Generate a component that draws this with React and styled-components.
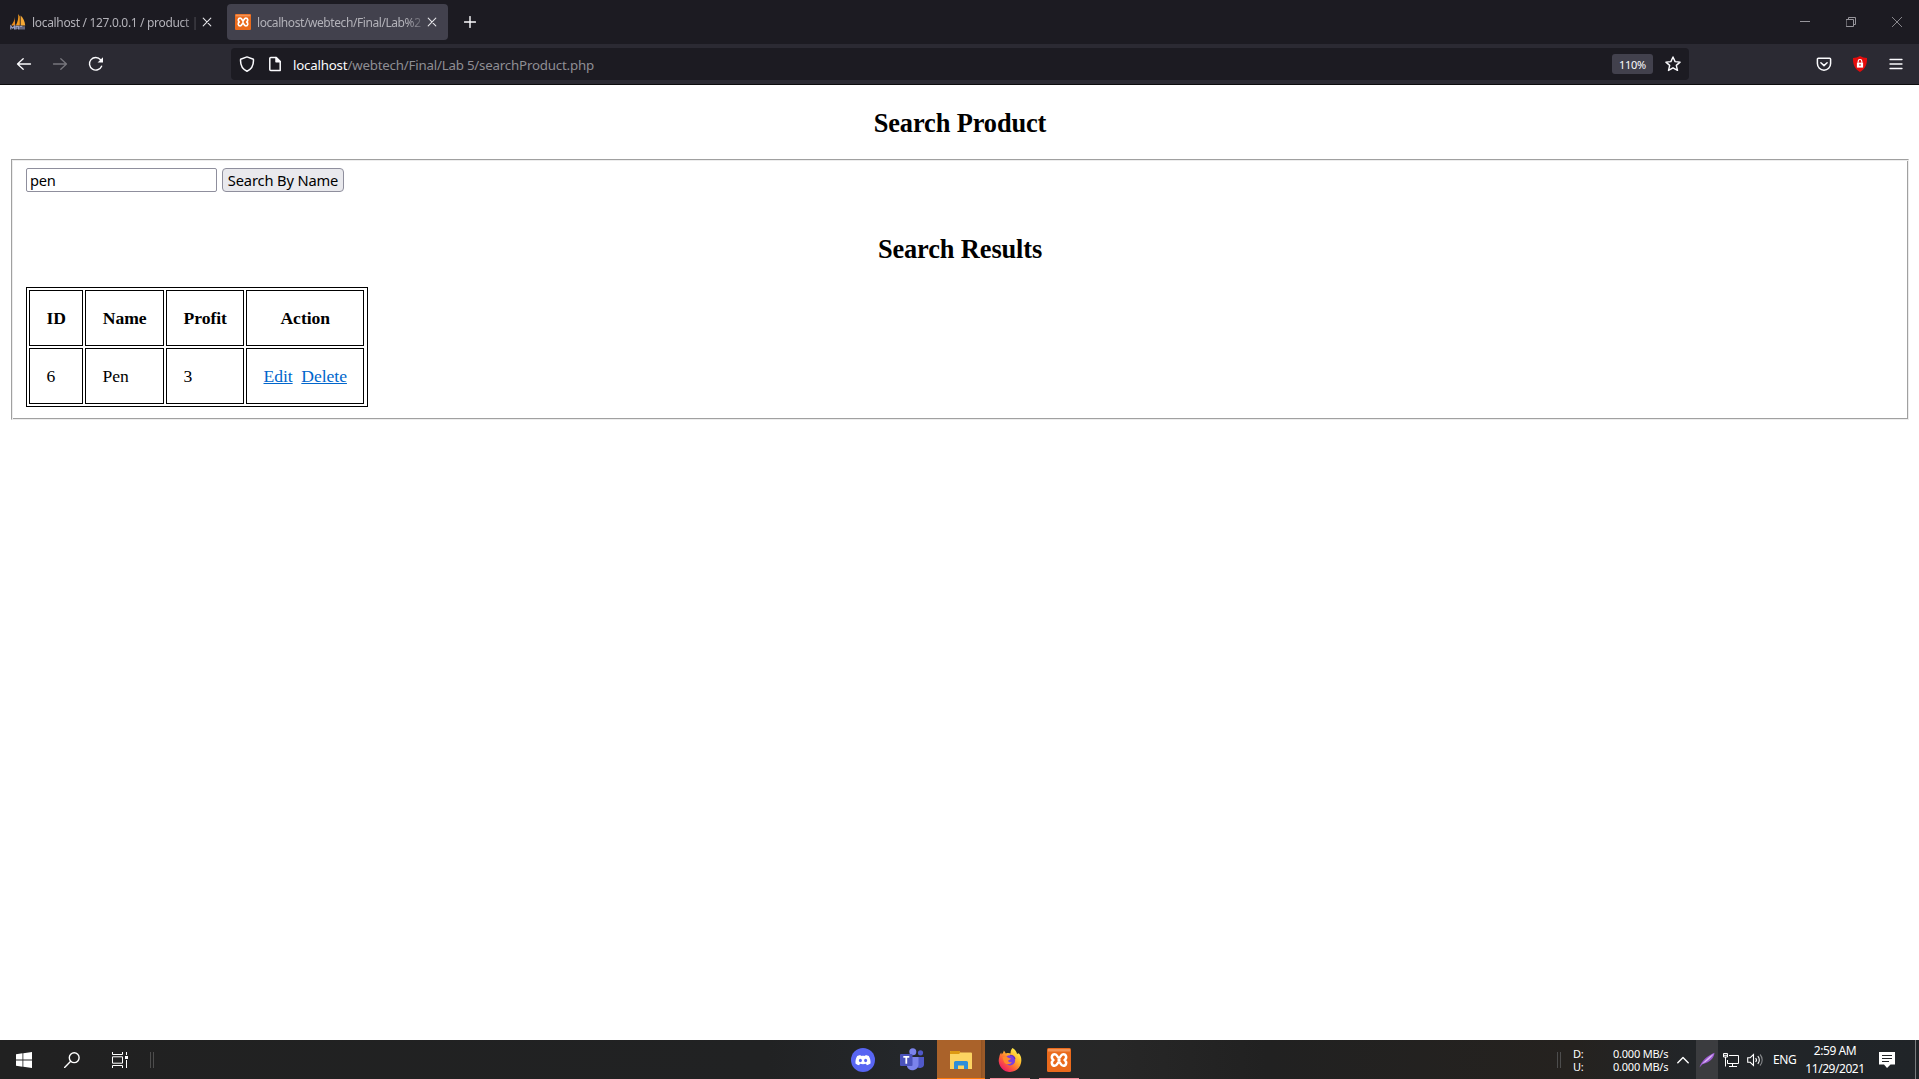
import React from 'react';
import styled, { createGlobalStyle } from 'styled-components';

const UI = `"Noto Sans", "Open Sans", "Liberation Sans", sans-serif`;
const SERIF = `"Liberation Serif", "Times New Roman", serif`;

const Global = createGlobalStyle`
  * { box-sizing: border-box; }
  html, body { margin: 0; padding: 0; background: #fff; overflow: hidden; }
  svg { display: block; flex: none; }
`;

const Screen = styled.div`
  display: flex;
  flex-direction: column;
  width: 1919px;
  height: 1079px;
  background: #fff;
  overflow: hidden;
`;

/* ---------- browser chrome ---------- */

const TabBar = styled.header`
  display: flex;
  flex: none;
  height: 44px;
  padding-top: 4px;
  background: #1c1b22;
  font-family: ${UI};
`;

const Tab = styled.div`
  display: flex;
  align-items: center;
  width: ${(p) => p.$width}px;
  height: 36px;
  margin-left: ${(p) => p.$gap}px;
  padding: 0 11px 0 8px;
  border-radius: 4px;
  background: ${(p) => (p.$active ? '#42414d' : 'transparent')};
`;

const TabTitle = styled.span`
  flex: 1;
  min-width: 0;
  margin: 1px 0 0 6px;
  white-space: pre;
  font-size: 12px;
  line-height: 20px;
  letter-spacing: ${(p) => p.$spacing}px;
  color: #b3b2b9;
  mask-image: linear-gradient(to left, transparent 0, #000 20px);
`;

const TabClose = styled.span`
  display: flex;
  align-items: center;
  justify-content: center;
  width: 10px;
  height: 24px;
`;

const IconButton = styled.span`
  display: flex;
  flex: none;
  align-items: center;
  justify-content: center;
  width: ${(p) => p.$width || 36}px;
  height: 36px;
`;

const Spacer = styled.div`
  flex: 1;
`;

const NavBar = styled.nav`
  display: flex;
  flex: none;
  align-items: center;
  height: 41px;
  padding: 0 5px 0 6px;
  background: #2b2a33;
  border-bottom: 1px solid #0c0c0d;
  font-family: ${UI};
`;

const UrlBar = styled.div`
  display: flex;
  align-items: center;
  width: 1458px;
  height: 32px;
  margin-left: 117px;
  padding: 0 2px;
  border-radius: 4px;
  background: #1c1b22;
`;

const Url = styled.span`
  flex: 1;
  margin: 2px 0 0 4px;
  font-size: 13.3px;
  line-height: 20px;
  letter-spacing: -0.2px;
  white-space: pre;
  color: #8f8e94;
`;

const Host = styled.span`
  color: #fbfbfe;
`;

const ZoomBadge = styled.span`
  width: 41px;
  height: 20px;
  margin-right: 6px;
  border-radius: 3px;
  background: #42414d;
  color: #fbfbfe;
  font-size: 11px;
  line-height: 21px;
  letter-spacing: -0.3px;
  text-align: center;
`;

/* ---------- web page ---------- */

const Page = styled.main`
  flex: 1;
  min-height: 0;
  padding: 0 10px 0 11px;
  font-family: ${SERIF};
  font-size: 17.6px;
  color: #000;
`;

const Heading = styled.h2`
  margin: 0;
  padding-top: ${(p) => p.$top}px;
  height: ${(p) => p.$height}px;
  font-size: 26.4px;
  line-height: 30px;
  letter-spacing: -0.12px;
  text-align: center;
`;

const Fieldset = styled.section`
  height: 261px;
  padding: 8px 13px 0;
  border: 1px solid;
  border-color: #a0a0a0 #ededed #ededed #a0a0a0;
  box-shadow: inset 1px 1px 0 #ededed, inset -1px -1px 0 #a0a0a0;
`;

const SearchRow = styled.div`
  display: flex;
  gap: 5px;
  padding-left: 1px;
`;

const SearchInput = styled.input`
  width: 191px;
  height: 24px;
  padding: 1px 3px;
  border: 1px solid #8f8f9d;
  border-radius: 2px;
  background: #fff;
  color: #000;
  font: 14.67px ${UI};
  letter-spacing: -0.3px;
  outline: none;
`;

const SearchButton = styled.button`
  width: 122px;
  height: 24px;
  padding: 0;
  border: 1px solid #8f8f9d;
  border-radius: 4px;
  background: #e9e9ed;
  color: #000;
  font: 14.67px/20px ${UI};
  letter-spacing: -0.13px;
  white-space: nowrap;
`;

const Results = styled.table`
  width: 342px;
  margin-left: 1px;
  table-layout: fixed;
  border: 1px solid #000;
  border-spacing: 2px;
  padding-right: 1px;
`;

const Cell = styled.td`
  width: ${(p) => p.$width}px;
  height: 56px;
  padding: 0 16px 0 16.5px;
  border: 1px solid #000;
  line-height: 20px;
  letter-spacing: -0.05px;
  white-space: pre;
`;

const HeadCell = styled(Cell)`
  font-weight: bold;
  text-align: center;
`;

const Link = styled.a`
  color: #0066cc;
  text-decoration: underline;
`;

/* ---------- taskbar ---------- */

const Taskbar = styled.footer`
  display: flex;
  flex: none;
  height: 39px;
  background: linear-gradient(90deg, #212121 0, #212223 40%, #24272a 47%, #272727 58%, #212121 66%, #25221f 82%, #222528 88%, #202428 100%);
  color: #fff;
  font-family: ${UI};
`;

const LeftGroup = styled.div`
  display: flex;
  flex: none;
  width: 839px;
`;

const Slot = styled.div`
  display: flex;
  flex: none;
  align-items: center;
  justify-content: center;
  width: ${(p) => p.$width || 48}px;
  height: 39px;
  padding-top: 1px;
`;

const Apps = styled.div`
  display: flex;
  gap: 1px;
`;

const ActiveSlot = styled(Slot)`
  border-bottom: 1px solid #ff7a0a;
  padding-top: 2px;
  background: linear-gradient(90deg, #aa622a 44px, #8c5023 44px, #9c5a28 46px);
`;

const RunningSlot = styled(Slot)`
  background: linear-gradient(#f58b99, #f58b99) 4px 38px / 40px 1px no-repeat;
`;

const Grip = styled.div`
  align-self: center;
  flex: none;
  width: 4px;
  height: 16px;
  margin-left: ${(p) => p.$left || 0}px;
  border: solid #4d4d4d;
  border-width: 0 1px;
`;

const NetMeter = styled.div`
  display: grid;
  grid-template-columns: 40px 56px;
  grid-auto-rows: 13px;
  align-content: start;
  width: 96px;
  margin-left: 12px;
  padding-top: 7px;
  font-size: 11px;
  line-height: 13px;
  letter-spacing: -0.22px;
  white-space: nowrap;
`;

const Chevron = styled(Slot)`
  margin-left: 3px;
`;

const PenSlot = styled(Slot)`
  margin-left: 2px;
  background: #3b3c3f;
`;

const Lang = styled.div`
  width: 36px;
  padding-left: 7px;
  font-size: 12px;
  line-height: 40px;
  letter-spacing: -0.45px;
`;

const Clock = styled.div`
  width: 66px;
  padding-top: 2px;
  font-size: 12px;
  line-height: 18px;
  letter-spacing: -0.45px;
  text-align: center;
  white-space: nowrap;
`;

const ShowDesktop = styled.div`
  width: 4px;
  margin-left: auto;
  border-left: 1px solid #7a7c7e;
`;

/* ---------- icons ---------- */

const Line = ({ w = 16, h = 16, box, color = '#fbfbfe', sw = 1.3, children }) => (
  <svg width={w} height={h} viewBox={box || `0 0 ${w} ${h}`} fill="none" stroke={color} strokeWidth={sw} strokeLinecap="round" strokeLinejoin="round">
    {children}
  </svg>
);

const CloseIcon = () => (
  <Line w={10} h={10} sw={1.1} color="#e4e4e8"><path d="M1.2 1.2l7.6 7.6M8.8 1.2L1.2 8.8" /></Line>
);

const XamppIcon = ({ size }) => (
  <svg width={size} height={size} viewBox="0 0 24 24">
    <rect width="24" height="24" rx="1.5" fill="#ea6a1c" />
    <path d="M1 1h22v2.500H1z" fill="#f7a56f" opacity=".7" />
    <path
      d="M7.800 6.200c2.600 0 2.400 3.600 4.200 3.600s1.600-3.600 4.200-3.600c3.400 0 3.900 4.300 1.300 5.800 2.600 1.500 2.100 5.800-1.300 5.800-2.600 0-2.400-3.600-4.200-3.600s-1.600 3.600-4.200 3.600c-3.400 0-3.900-4.300-1.300-5.800-2.600-1.500-2.100-5.800 1.300-5.800z"
      fill="#ea6a1c"
      stroke="#fff"
      strokeWidth="2.500"
      strokeLinejoin="round"
    />
    <path d="M10.500 12h3" stroke="#fff" strokeWidth="2.600" />
  </svg>
);

const SailIcon = () => (
  <svg width="16" height="16" viewBox="0 0 16 16">
    <path d="M8.200 0C8.600 4 7.800 8 5.800 11.500H9.800V2.500z" fill="#f39a1f" />
    <path d="M4.600 3C4.600 6 3.400 9 1 11.500h4.200z" fill="#e9891c" />
    <path d="M10.600 1.500c2.800 2.500 4.200 6 4.600 10h-4.600z" fill="#f6a935" />
    <path d="M.8 15.500V12l2 2.200 1.800-2.200v3.500M6 15.500v-3.200h2.500v3.200M6 14h2.500M10 15.500v-3.200h2v3.200M14 12.300v3.200" fill="none" stroke="#989dc0" strokeWidth="1.200" />
  </svg>
);

const BackIcon = () => (
  <Line><path d="M1.500 8h13M7.200 2.700L1.500 8l5.700 5.300" /></Line>
);
const ForwardIcon = () => (
  <Line color="#77767d"><path d="M14.500 8h-13M8.800 2.700L14.500 8l-5.700 5.300" /></Line>
);
const ReloadIcon = () => (
  <Line sw={1.400}>
    <path d="M13.600 10.200A6.300 6.300 0 1 1 12.600 3.700" />
    <path d="M15 1.200v5.400H9.600z" fill="#fbfbfe" stroke="none" />
  </Line>
);
const ShieldIcon = () => (
  <Line sw={1.500}><path d="M8 .9l6.400 2.300c.4 5-1.500 9.800-6.400 12C3.100 13 1.200 8.200 1.600 3.200z" /></Line>
);
const PageIcon = () => (
  <Line w={14} h={16} sw={1.500}>
    <path d="M2.800 1.600h5.400l4 4v8.800H2.800a1 1 0 0 1-1-1V2.600a1 1 0 0 1 1-1z" />
    <path d="M8 1.600v4.200h4.200z" fill="#fbfbfe" />
  </Line>
);
const StarIcon = () => (
  <Line sw={1.400}><path d="M8 1l2.100 4.600 5 .5-3.800 3.300 1.200 5L8 11.800l-4.500 2.600 1.200-5L.9 6.100l5-.5z" /></Line>
);
const PocketIcon = () => (
  <Line sw={1.500}>
    <path d="M2.400 2.300h11.200a1 1 0 0 1 1 1v4.300a6.600 6.600 0 0 1-13.200 0V3.300a1 1 0 0 1 1-1z" />
    <path d="M4.900 6.700L8 9.600l3.100-2.900" />
  </Line>
);
const BlockIcon = () => (
  <svg width="16" height="16" viewBox="0 0 16 16">
    <path d="M8 0c2 1.300 4.500 1.900 7 2 .2 6.500-1.800 11-7 14C2.800 13 .8 8.500 1 2c2.500-.1 5-.7 7-2z" fill="#e40c0c" />
    <rect x="4.900" y="6.600" width="6.200" height="5" fill="#fff" />
    <path d="M6.200 6.800V5.300a1.800 1.800 0 0 1 3.600 0v1.500" fill="none" stroke="#fff" strokeWidth="1.200" />
    <rect x="7.500" y="8" width="1" height="2" fill="#e40c0c" />
  </svg>
);
const MenuIcon = () => (
  <Line w={14} h={12} sw={1.300}><path d="M1 1.500h12M1 6h12M1 10.500h12" /></Line>
);

const WindowsIcon = () => (
  <svg width="16" height="16" viewBox="0 0 16 16" fill="#fff">
    <path d="M0 2.200L6.500 1.300v6.200H0zM7.300 1.200L16 0v7.500H7.300zM0 8.400h6.500v6.300L0 13.800zM7.300 8.400H16V16l-8.700-1.200z" />
  </svg>
);
const SearchIcon = () => (
  <Line sw={1.400} color="#fff"><circle cx="10.200" cy="5.700" r="4.900" /><path d="M6.700 9.300L.6 15.400" /></Line>
);
const TaskViewIcon = () => (
  <svg width="16" height="16" viewBox="0 0 16 16" fill="none" stroke="#fff" strokeWidth="1">
    <path d="M.5 0v2.500h10V0M.5 16v-2.500h10V16M.5 4.800h10v6.400H.5zM14.500 0v3M14.500 8v8" />
    <rect x="13" y="4" width="3" height="3" fill="#fff" stroke="none" />
  </svg>
);

const DiscordIcon = () => (
  <svg width="24" height="24" viewBox="0 0 24 24">
    <circle cx="12" cy="12" r="12" fill="#5865f2" />
    <path d="M9.400 6.900c-1.300.2-2.300.6-3.200 1.100C4.800 10.200 4.300 12.600 4.500 15.500c1.300 1 2.500 1.500 3.600 1.700l.9-1.500c2 .6 4 .6 6 0l.9 1.500c1.200-.2 2.400-.8 3.600-1.700.3-2.900-.4-5.400-1.700-7.500-1-.5-2-.9-3.200-1.100l-.5 1c-1.400-.2-2.800-.2-4.200 0z" fill="#fff" />
    <ellipse cx="9.400" cy="12.500" rx="1.500" ry="1.700" fill="#5865f2" />
    <ellipse cx="14.600" cy="12.500" rx="1.500" ry="1.700" fill="#5865f2" />
  </svg>
);

const TeamsIcon = () => (
  <svg width="24" height="24" viewBox="0 0 24 24">
    <circle cx="20.500" cy="4.800" r="2.600" fill="#5059c9" />
    <path d="M16 9h8v6.500a4 4 0 0 1-8 1z" fill="#5059c9" />
    <circle cx="12.800" cy="3.700" r="3.500" fill="#7b83eb" />
    <path d="M7 9h11.500v8a6 6 0 0 1-11.500 1.500z" fill="#7b83eb" />
    <rect x="0" y="6" width="12.500" height="12" rx="1" fill="#4b53bc" />
    <path d="M3.300 8.800h6M6.300 8.800v7" stroke="#fff" strokeWidth="1.800" />
  </svg>
);

const FolderIcon = () => (
  <svg width="22" height="18" viewBox="0 0 22 18">
    <path d="M0 1a1 1 0 0 1 1-1h8l1.500 1.500H21a1 1 0 0 1 1 1V18H0z" fill="#fcd462" />
    <path d="M0 1a1 1 0 0 1 1-1h8l1.500 1.200L9 3H0z" fill="#dd9a12" />
    <path d="M4 18v-6.500A1.500 1.500 0 0 1 5.500 10h11a1.500 1.500 0 0 1 1.500 1.500V18h-4v-3.500H8V18z" fill="#2f8ed8" />
  </svg>
);

const FirefoxIcon = () => (
  <svg width="24" height="24" viewBox="0 0 24 24">
    <defs>
      <linearGradient id="fox" x1="0.850" y1="0.100" x2="0.200" y2="0.900">
        <stop offset="0" stopColor="#fff44f" />
        <stop offset=".35" stopColor="#ffb52c" />
        <stop offset=".65" stopColor="#ff6a35" />
        <stop offset="1" stopColor="#ee1f63" />
      </linearGradient>
    </defs>
    <path d="M14.500 0c2.800 1.600 4 3.600 4.500 5.700.9.300 1.300.1 1.400-.7C22.800 7 23.500 10 23.300 13A11.300 11.300 0 1 1 1.300 9c.2-2 1-3.500 1.900-4.600l.6 2C4.700 5.200 5.500 4 5.800 2.400c1 .8 1.500 1.900 2 3 2.200-.5 3.600-.4 4.700.2C12.500 3.400 13 1.500 14.500 0z" fill="url(#fox)" />
    <circle cx="12" cy="12.400" r="5.100" fill="#7a3fe0" />
    <path d="M4.500 9.200c2.200-1.300 4.700-.7 6.300.8l2.200.4c-.5 1.300-2 1.500-3 2 .3 1.600 2 2.300 4 1.700-2 3.500-7.500 2.800-8.500-1.400z" fill="#ff8a2c" />
    <path d="M12 7.300c2.500-.3 4.700 1.300 5 4" fill="none" stroke="#5b2fc0" strokeWidth="1.200" />
  </svg>
);

const PenIcon = () => (
  <svg width="16" height="16" viewBox="0 0 16 16">
    <path d="M.5 15.500C2.500 9 8 4 15.500.8c-.3 5-4 9.200-12 11.400z" fill="#9b59d0" />
    <path d="M.5 15.500C4 10 9 5.500 15 1.500 12 6 8 9.500 3 12z" fill="#dcb8f5" />
  </svg>
);

const NetworkIcon = () => (
  <svg width="18" height="16" viewBox="0 0 18 16" fill="none" stroke="#fff" strokeWidth="1">
    <path d="M7 3.500h9.500v8H5.500V8M10.500 11.500v3M7 14.500h8M1.500 1.500h4v3.500h-4zM3.500 5v9.500" />
    <path d="M1 3.300h5" />
  </svg>
);

const VolumeIcon = () => (
  <svg width="17" height="14" viewBox="0 0 17 14" fill="none" stroke="#fff" strokeWidth="1.100">
    <path d="M.7 4.700h2.500L6.500 1.500v11L3.200 9.300H.7z" />
    <path d="M8.600 5a3 3 0 0 1 0 4M10.800 3.200a5.500 5.500 0 0 1 0 7.600" />
    <path d="M13 1.500a8 8 0 0 1 0 11" stroke="#85878a" />
  </svg>
);

const NoticeIcon = () => (
  <svg width="16" height="16" viewBox="0 0 16 16">
    <path d="M0 0h16v12.500h-4.500L8 16l-3-3.500H0z" fill="#fff" />
    <path d="M3 3.500h10M3 6.500h10M3 9.500h7" stroke="#222528" strokeWidth="1" />
  </svg>
);

const rows = [{ id: '6', name: 'Pen', profit: '3' }];

export default function App() {
  return (
    <Screen>
      <Global />
      <TabBar>
        <Tab $width={221} $gap={2}>
          <SailIcon />
          <TabTitle $spacing={-0.33}>localhost / 127.0.0.1 / product |</TabTitle>
          <TabClose><CloseIcon /></TabClose>
        </Tab>
        <Tab $width={221} $gap={4} $active>
          <XamppIcon size={16} />
          <TabTitle $spacing={-0.42}>localhost/webtech/Final/Lab%2</TabTitle>
          <TabClose><CloseIcon /></TabClose>
        </Tab>
        <IconButton $width={44}>
          <Line w={12} h={12} sw={1.400}><path d="M6 .6v10.800M.6 6h10.800" /></Line>
        </IconButton>
        <Spacer />
        <IconButton $width={46}>
          <Line w={10} h={10} sw={1} color="#96959b"><path d="M0 4.500h10" /></Line>
        </IconButton>
        <IconButton $width={46}>
          <Line w={10} h={10} sw={1} color="#96959b"><path d="M.5 2.500h7v7h-7zM2.500 2.500v-2h7v7h-2" /></Line>
        </IconButton>
        <IconButton $width={45}>
          <Line w={10} h={10} sw={0.900} color="#96959b"><path d="M.3.300l9.400 9.400M9.700.300L.3 9.700" /></Line>
        </IconButton>
      </TabBar>

      <NavBar>
        <IconButton><BackIcon /></IconButton>
        <IconButton><ForwardIcon /></IconButton>
        <IconButton><ReloadIcon /></IconButton>
        <UrlBar>
          <IconButton $width={28}><ShieldIcon /></IconButton>
          <IconButton $width={28}><PageIcon /></IconButton>
          <Url><Host>localhost</Host>/webtech/Final/Lab 5/searchProduct.php</Url>
          <ZoomBadge>110%</ZoomBadge>
          <IconButton $width={28}><StarIcon /></IconButton>
        </UrlBar>
        <Spacer />
        <IconButton><PocketIcon /></IconButton>
        <IconButton><BlockIcon /></IconButton>
        <IconButton><MenuIcon /></IconButton>
      </NavBar>

      <Page>
        <Heading $top={23} $height={74}>Search Product</Heading>
        <Fieldset>
          <SearchRow>
            <SearchInput defaultValue="pen" />
            <SearchButton>Search By Name</SearchButton>
          </SearchRow>
          <Heading $top={42} $height={95}>Search Results</Heading>
          <Results>
            <tbody>
              <tr>
                <HeadCell as="th" $width={54}>ID</HeadCell>
                <HeadCell as="th" $width={79}>Name</HeadCell>
                <HeadCell as="th" $width={78}>Profit</HeadCell>
                <HeadCell as="th" $width={118}>Action</HeadCell>
              </tr>
              {rows.map((r) => (
                <tr key={r.id}>
                  <Cell>{r.id}</Cell>
                  <Cell>{r.name}</Cell>
                  <Cell>{r.profit}</Cell>
                  <Cell><Link>Edit</Link>{'  '}<Link>Delete</Link></Cell>
                </tr>
              ))}
            </tbody>
          </Results>
        </Fieldset>
      </Page>

      <Taskbar>
        <LeftGroup>
          <Slot><WindowsIcon /></Slot>
          <Slot><SearchIcon /></Slot>
          <Slot><TaskViewIcon /></Slot>
          <Grip $left={6} />
        </LeftGroup>
        <Apps>
          <Slot><DiscordIcon /></Slot>
          <Slot><TeamsIcon /></Slot>
          <ActiveSlot><FolderIcon /></ActiveSlot>
          <RunningSlot><FirefoxIcon /></RunningSlot>
          <RunningSlot><XamppIcon size={24} /></RunningSlot>
        </Apps>
        <Grip $left={474} />
        <NetMeter>
          <span>D:</span><span>0.000 MB/s</span>
          <span>U:</span><span>0.000 MB/s</span>
        </NetMeter>
        <Chevron $width={22}>
          <Line w={12} h={8} color="#fff" sw={1.400}><path d="M.8 6.800L6 1.600l5.200 5.200" /></Line>
        </Chevron>
        <PenSlot $width={22}><PenIcon /></PenSlot>
        <Slot $width={26}><NetworkIcon /></Slot>
        <Slot $width={22}><VolumeIcon /></Slot>
        <Lang>ENG</Lang>
        <Clock>
          <div>2:59 AM</div>
          <div>11/29/2021</div>
        </Clock>
        <Slot $width={38}><NoticeIcon /></Slot>
        <ShowDesktop />
      </Taskbar>
    </Screen>
  );
}
